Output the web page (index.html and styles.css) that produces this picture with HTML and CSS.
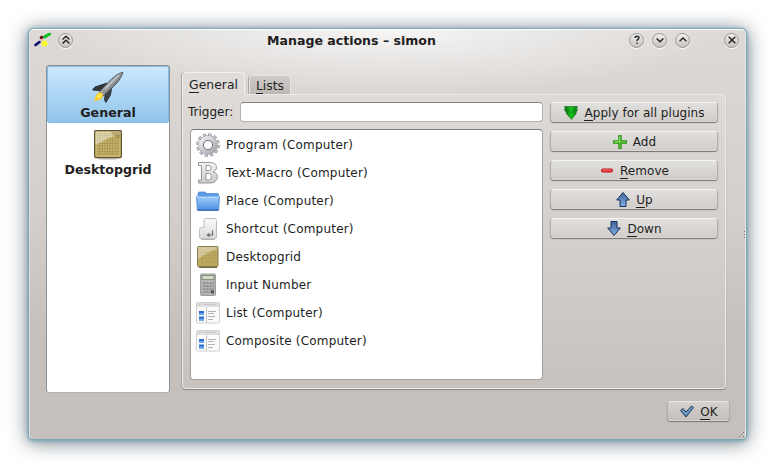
FILE: index.html
```
<!DOCTYPE html>
<html lang="en">
<head>
<meta charset="utf-8">
<title>Manage actions – simon</title>
<link rel="stylesheet" href="styles.css">
</head>
<body>
<svg width="0" height="0" class="defs">
  <defs>
    <linearGradient id="silver" x1="0" y1="0" x2="1" y2="1"><stop offset="0" stop-color="#f0f0f3"/><stop offset="1" stop-color="#a6a6ad"/></linearGradient>
    <linearGradient id="bold" x1="0" y1="0" x2="0" y2="1"><stop offset="0" stop-color="#f4f4f4"/><stop offset="1" stop-color="#c9c9c9"/></linearGradient>
    <linearGradient id="folder" x1="0" y1="0" x2="0" y2="1"><stop offset="0" stop-color="#a4cdfb"/><stop offset="1" stop-color="#4a8fe0"/></linearGradient>
    <linearGradient id="key" x1="0" y1="0" x2="0" y2="1"><stop offset="0" stop-color="#fbfbfb"/><stop offset="1" stop-color="#d8d8d8"/></linearGradient>
    <linearGradient id="blue" x1="0" y1="0" x2="0" y2="1"><stop offset="0" stop-color="#3e6294"/><stop offset="1" stop-color="#86b0ea"/></linearGradient>
    <linearGradient id="green" x1="0" y1="0" x2="1" y2="0"><stop offset="0" stop-color="#0a5c10"/><stop offset=".5" stop-color="#15c41d"/><stop offset="1" stop-color="#0a6a10"/></linearGradient>
    <linearGradient id="hull" x1="0" y1="0" x2="1" y2="1"><stop offset="0" stop-color="#e4e6e8"/><stop offset=".5" stop-color="#92979c"/><stop offset="1" stop-color="#2c3035"/></linearGradient>
    <pattern id="mesh" width="2.6" height="2.6" patternUnits="userSpaceOnUse"><path d="M0 0H2.6M0 0V2.6" stroke="#80702f" stroke-width=".7"/></pattern>
    <symbol id="grid" viewBox="0 0 28 30">
      <ellipse cx="14" cy="28.6" rx="11" ry="1.1" fill="#000" opacity=".2"/>
      <rect x=".6" y=".6" width="26.8" height="27" rx="1" fill="#c9b66c" stroke="#5d5435" stroke-width="1.2"/>
      <rect x="3" y="3" width="22" height="22" fill="url(#mesh)"/>
      <path d="M1.5 1.5h25v3C19 5 8 12 1.5 15z" fill="#fff" opacity=".42"/>
      <path d="M17 1.500h9.500v7C22 8 17 4 17 1.500z" fill="#8d7936" opacity=".4"/>
    </symbol>
    <symbol id="gridsmall" viewBox="0 0 24 24">
      <path d="M3 22.500h18" stroke="#6d653f"/>
      <rect x="1.500" y="1.500" width="20.500" height="20" rx="1" fill="#bba95f" stroke="#857b55"/>
      <path d="M2 2h19v2C14 6 8 10 2 14z" fill="#fff" opacity=".38"/>
      <path d="M4 7.500h16M4 10.500h16M4 13.500h16M4 16.500h16M6.500 5v15M10.500 5v15M14.500 5v15M18.500 5v15" stroke="#887437" stroke-width=".5" opacity=".25"/>
    </symbol>
    <symbol id="listicon" viewBox="0 0 24 24">
      <rect x=".5" y="1.500" width="23" height="20.500" rx="1" fill="#fbfbfb" stroke="#cfcfcf"/>
      <path d="M1 2h22v4H1z" fill="#dedede"/>
      <path d="M3 3.500h2M8 3.500h11" stroke="#c6c6c6"/>
      <path d="M10.500 6.500v15" stroke="#c3c3c3"/>
      <path d="M3 10h5v4H3zM3 15.500h5v4H3z" fill="#246bd0"/>
      <path d="M3 12h5v2H3zM3 17.500h5v2H3z" fill="#69a5ed"/>
      <path d="M12 10.500h8M12 12.500h6M12 15.500h7M12 18.500h5" stroke="#b4b4b4"/>
    </symbol>
  </defs>
</svg>
<div class="window">
  <header class="titlebar">
    <svg class="app-icon" width="18" height="14" viewBox="0 0 18 14">
      <path d="M10.500 4l5-3" stroke="#08c01c" stroke-width="3" stroke-linecap="round"/>
      <path d="M1.500 12l4-3" stroke="#07076c" stroke-width="2.500" stroke-linecap="round"/>
      <circle cx="7.500" cy="4.500" r="1.800" fill="#6c0710"/>
      <path d="M6 7.500l3-2M8 6l1 3" stroke="#e8a0a0" stroke-width=".8"/>
      <circle cx="10.500" cy="10.500" r="3.100" fill="#fafa33"/>
    </svg>
    <span class="round shade"><svg width="16" height="16" viewBox="0 0 16 16"><path d="M4.500 7.500L8 4.200l3.500 3.300M4.500 11.500L8 8.200l3.500 3.300"/></svg></span>
    <h1 class="title">Manage actions – simon</h1>
    <span class="round"><svg width="16" height="16" viewBox="0 0 16 16"><path d="M6 6c0-2.200 4-2.300 4-.2C10 7.300 8 7 8 9M8 10.500v1.300"/></svg></span>
    <span class="round"><svg width="16" height="16" viewBox="0 0 16 16"><path d="M4.600 6.500L8 9.800l3.400-3.300"/></svg></span>
    <span class="round"><svg width="16" height="16" viewBox="0 0 16 16"><path d="M4.600 9.300L8 6l3.400 3.300"/></svg></span>
    <span class="round close"><svg width="16" height="16" viewBox="0 0 16 16"><path d="M4.700 4.700l6.600 6.600M11.300 4.700l-6.600 6.600"/></svg></span>
  </header>
  <div class="main">
    <nav class="sidebar">
      <div class="page selected">
        <svg width="32" height="32" viewBox="0 0 32 32">
          <path d="M15 12L3 16l-2.500 3L12 20z" fill="#33373c" stroke="#15181b" stroke-width=".7"/>
          <path d="M20 15l-1.500 9-4.500 7.500L12.500 29l1-9z" fill="#3f4449" stroke="#15181b" stroke-width=".7"/>
          <path d="M31 1c-5 1.500-10 5-14 9.500L7.500 20.500l4 4.500L21 16c4.500-4 8.500-9 10-15z" fill="url(#hull)" stroke="#34383c" stroke-width=".7"/>
          <path d="M27 4L13 18" stroke="#e9edf0" stroke-width="1.200" opacity=".6"/>
          <path d="M7.500 21.500c-3 .5-4.500 4-5 8.500 4-.5 7.500-2 8.500-5.500 1-2-2-3.500-3.500-3z" fill="#ffcb27"/>
          <path d="M7.500 23c-2 1-2.500 3-3 4.500 2.500-.5 4-1.500 4.500-3z" fill="#fff16b"/>
        </svg>
        <span>General</span>
      </div>
      <div class="page">
        <svg width="28" height="30"><use href="#grid"/></svg>
        <span>Desktopgrid</span>
      </div>
    </nav>
    <section class="content">
      <div class="tabs">
        <div class="tab active"><span><u>G</u>eneral</span></div>
        <div class="tab"><span><u>L</u>ists</span></div>
      </div>
      <div class="panel">
        <div class="left">
          <div class="trigger"><label for="trigger">Trigger:</label><input id="trigger" type="text"></div>
          <ul class="list">
            <li><svg width="24" height="24" viewBox="0 0 24 24"><circle cx="12" cy="12" r="10.300" fill="none" stroke="#8b8b94" stroke-width="3" stroke-dasharray="3.200 2.193"/><circle cx="12" cy="12" r="10.300" fill="none" stroke="#cfcfd6" stroke-width="1.800" stroke-dasharray="2 3.393" stroke-dashoffset="-.6"/><circle cx="12" cy="12" r="7" fill="none" stroke="#93939c" stroke-width="5.400"/><circle cx="12" cy="12" r="7" fill="none" stroke="url(#silver)" stroke-width="4.600"/><circle cx="12" cy="12" r="4.600" fill="#fff" stroke="#73737b"/></svg>Program (Computer)</li>
            <li><svg width="24" height="24" viewBox="0 0 24 24"><path fill-rule="evenodd" d="M2.500 1.500H13c5 0 7.500 1.600 7.500 5 0 2-1.300 3.500-3.500 4.300 3 .7 4.300 2.400 4.300 4.900 0 4.200-3 6.300-8 6.300H2.500v-3h3V4.500h-3zM10 4.500v5h2c2 0 3-.8 3-2.600s-1-2.400-3-2.400zm0 8V19h2.300c2 0 3-1.200 3-3.300 0-2.200-1-3.200-3-3.200z" fill="url(#bold)" stroke="#959595"/></svg>Text-Macro (Computer)</li>
            <li><svg width="24" height="24" viewBox="0 0 24 24"><path d="M2 9V4l1-1h6l1.500 1.500H22l.5 1V10z" fill="#5b9be6" stroke="#4e8cd6" stroke-width=".8"/><path d="M.5 7.500h23L22.700 21H1.300z" fill="url(#folder)" stroke="#4485d4" stroke-width=".8"/><path d="M1 8h22" stroke="#c5e2ff"/><path d="M1.500 21.300h21" stroke="#2c5d9f"/></svg>Place (Computer)</li>
            <li><svg width="24" height="24" viewBox="0 0 24 24"><path d="M10 1.500h8.500q2 0 2 2V20q0 2-2 2H5.500q-2 0-2-2v-7.500q0-2 2-2H8v-7q0-2 2-2z" fill="url(#key)" stroke="#bebebe"/><path d="M5.500 22.300h13" stroke="#a3a3a3"/><path d="M16.500 13.500V18H13" fill="none" stroke="#66696b" stroke-width="1.200"/><path d="M13.500 15.800v4.400L10.300 18z" fill="#66696b"/></svg>Shortcut (Computer)</li>
            <li><svg width="24" height="24"><use href="#gridsmall"/></svg>Desktopgrid</li>
            <li><svg width="24" height="24" viewBox="0 0 24 24"><rect x="4.500" y="1" width="15" height="21.500" rx="1" fill="#b4b4b4" stroke="#9c9c9c"/><rect x="6" y="2.500" width="12" height="4" fill="#d0dbc2" stroke="#747a6e" stroke-width=".7"/><path d="M6.500 9.500h11M6.500 12.500h11M6.500 15.500h11M6.500 18.500h11" stroke="#666" stroke-width="2" stroke-dasharray="2.200 .73"/><path d="M6.500 9h11M6.500 12h11M6.500 15h11M6.500 18h8" stroke="#f1f1f1" stroke-width="1" stroke-dasharray="1.800 1.130"/><path d="M15 17.500h3v3h-3z" fill="#555"/></svg>Input Number</li>
            <li><svg width="24" height="24"><use href="#listicon"/></svg>List (Computer)</li>
            <li><svg width="24" height="24"><use href="#listicon"/></svg>Composite (Computer)</li>
          </ul>
        </div>
        <div class="buttons">
          <button class="btn"><svg width="16" height="16" viewBox="0 0 16 16"><path d="M1.500 1.500h13l-1.200 3.300 1.400-.3-2 3.700h.8L8.500 14.500 3 8.200h.8L1.300 4.500l1.200.3z" fill="url(#green)" stroke="#0c7314" stroke-width=".6"/><path d="M3 4.500l5.300 3 5-3" fill="none" stroke="#0b7a13" stroke-width=".6"/></svg><span><u>A</u>pply for all plugins</span></button>
          <button class="btn"><svg width="16" height="16" viewBox="0 0 16 16"><path d="M6.800 1.500h2.400v5.300h5.300v2.400H9.200v5.300H6.800V9.200H1.500V6.800h5.300z" fill="#64c837" stroke="#2e9422" stroke-width="1.100" stroke-linejoin="round"/><path d="M7.500 3v4.500H3" fill="none" stroke="#a3e67e" stroke-width=".8"/></svg><span>Add</span></button>
          <button class="btn"><svg width="16" height="16" viewBox="0 0 16 16"><rect x="2.500" y="6" width="11" height="3" rx="1.200" fill="#e73b3b" stroke="#c31015"/><path d="M4 7h8" stroke="#f58b8b" stroke-width=".8"/></svg><span><u>R</u>emove</span></button>
          <button class="btn"><svg width="16" height="16" viewBox="0 0 16 16"><path d="M8 .5L14.300 8H11v6.500H5V8H1.700z" fill="url(#blue)" stroke="#17315c" stroke-linejoin="round"/></svg><span><u>U</u>p</span></button>
          <button class="btn"><svg width="16" height="16" viewBox="0 0 16 16"><path d="M8 14.500L14.300 7H11V.5H5V7H1.700z" fill="url(#blue)" stroke="#17315c" stroke-linejoin="round"/></svg><span><u>D</u>own</span></button>
        </div>
      </div>
    </section>
  </div>
  <footer class="footer">
    <button class="btn ok"><svg width="16" height="16" viewBox="0 0 16 16"><path d="M1.500 6.500L4 4.500l3 3.500L12.500 2l2 1.500L7 13z" fill="#5d8dbc" stroke="#263f5c" stroke-linejoin="round"/><path d="M3.500 6.500L7 10 13 3.500" fill="none" stroke="#85add3" stroke-width=".8"/></svg><span><u>O</u>K</span></button>
  </footer>
  <svg class="grip side" width="3" height="9" viewBox="0 0 3 9"><path d="M1 0h1v1H1zM1 3h1v1H1zM1 6h1v1H1z"/></svg>
  <svg class="grip corner" width="7" height="7" viewBox="0 0 7 7"><path d="M5 1h1v1H5zM3 3h1v1H3zM1 5h1v1H1zM5 5h1v1H5z"/></svg>
</div>
</body>
</html>
```
FILE: styles.css
```
* { box-sizing: border-box; }
body {
  margin: 0;
  width: 775px;
  height: 468px;
  padding: 29px;
  overflow: hidden;
  background: #fff;
  color: #221e1e;
  font: 12px/16px "DejaVu Sans", sans-serif;
}
svg { display: block; flex: none; }
.defs { position: absolute; }
u { text-decoration: none; box-shadow: 0 1px 0 #221e1e; }
.window {
  position: relative;
  width: 717px;
  height: 410px;
  border: 1px solid;
  border-color: #fff #e5e5e5 #c6c0bc #dedddb;
  border-radius: 5px 5px 4px 4px;
  background:
    radial-gradient(ellipse 340px 64px at 50% 0, rgba(255,255,255,.75), rgba(255,255,255,0)),
    linear-gradient(#dcd9d6, #d4cfcc 45%, #c6c0bc 75%);
  box-shadow: 0 0 0 1px #80a6b9, 0 1px 4px 1px #6f9fb6, 0 2px 19px 2px rgba(45,60,72,.62);
}
.titlebar { display: flex; height: 21px; padding: 0 6px 1px 4px; align-items: center; }
.round {
  width: 15px;
  height: 15px;
  margin-right: 8px;
  border: 1px solid #9b9896;
  border-radius: 50%;
  background: linear-gradient(#f1f0ef, #c6c2bf);
  box-shadow: 0 1px 1px #fff;
  flex: none;
}
.round svg { margin: -1.500px 0 0 -1.500px; fill: none; stroke: #222; stroke-width: 1.400; }
.round.shade { margin: 0 0 0 6px; }
.round.close { margin: 0 0 0 26px; }
.title { flex: 1; margin: 1px 0 0; padding-left: 1px; text-align: center; font-size: 12.550px; line-height: 18px; }
.main { display: flex; gap: 12px; margin: 14px 19px 0 16px; height: 328px; }
.sidebar {
  width: 124px;
  height: 328px;
  border: 1px solid #8e9297;
  border-bottom-color: #b5b1af;
  border-radius: 3px;
  background: #fff;
  font-weight: bold;
  font-size: 12.600px;
}
.page { height: 57px; display: flex; flex-direction: column; align-items: center; padding-top: 7px; }
.page.selected { padding-top: 4px; background: linear-gradient(#cce8ff, #90c4ea); border: 1px solid #84bbe4; border-radius: 2px; }
.page svg { margin-bottom: 2px; }
.content { width: 544px; padding-top: 7px; display: flex; flex-direction: column; }
.tabs { display: flex; gap: 4px; align-items: flex-end; height: 22px; font-size: 12.400px; }
.tab { height: 19px; width: 42px; text-align: center; line-height: 19px; border: 1px solid #e7e5e4; border-bottom: 0; border-radius: 4px 4px 0 0; background: linear-gradient(#cfcac7, #beb9b5); box-shadow: -1px 0 #aaa6a4; }
.tab.active { z-index: 1; width: 63px; height: 23px; margin-bottom: -1px; line-height: 23px; border-color: #f2f1f0; background: #dfdcda; box-shadow: -1px 0 #aaa6a4; }
.panel {
  display: flex;
  gap: 7px;
  flex: 1;
  height: 295px;
  margin-bottom: 4px;
  border: 1px solid #eceae9;
  border-radius: 0 4px 4px 4px;
  padding: 7px 7px 8px 5px;
  background: linear-gradient(#dddad7, #d3cfcb 50%, #c8c2be);
  box-shadow: -1px 0 #aaa6a4, 0 1px 1px #858280;
}
.left { width: 355px; display: flex; flex-direction: column; gap: 7px; }
.trigger { display: flex; align-items: center; height: 20px; gap: 6px; }
.trigger label { width: 46px; white-space: nowrap; }
.trigger input { flex: 1; min-width: 0; height: 20px; border: 1px solid #b4b1af; border-top-color: #858281; border-radius: 4px; background: #fff; }
.list { flex: 1; list-style: none; margin: 0 0 0 2px; padding: 1px 5px; border: 1px solid #a29f9d; border-top-color: #7b7877; border-radius: 4px; background: #fff; }
.list li { display: flex; align-items: center; gap: 6px; height: 28px; font-size: 12px; letter-spacing: .2px; }
.buttons { width: 168px; display: flex; flex-direction: column; gap: 9px; }
.btn {
  display: flex;
  align-items: center;
  justify-content: center;
  gap: 5px;
  height: 20px;
  padding: 1px 0 0;
  border: 1px solid #b2aeac;
  border-top-color: #f4f3f3;
  border-bottom-color: #d8d5d3;
  border-radius: 4px;
  background: linear-gradient(#e2e0de, #d0cdca);
  box-shadow: 0 1px 1px #777472;
  color: inherit;
  font: inherit;
  letter-spacing: .04px;
}
.footer { display: flex; justify-content: flex-end; margin: 8px 15px 0 0; }
.ok { width: 63px; background: linear-gradient(#d5d1ce, #c4bfbb); border-top-color: #e8e6e5; }
.grip { position: absolute; fill: #777371; }
.side { right: -1px; top: 201px; }
.corner { right: 0; bottom: 0; }
```
